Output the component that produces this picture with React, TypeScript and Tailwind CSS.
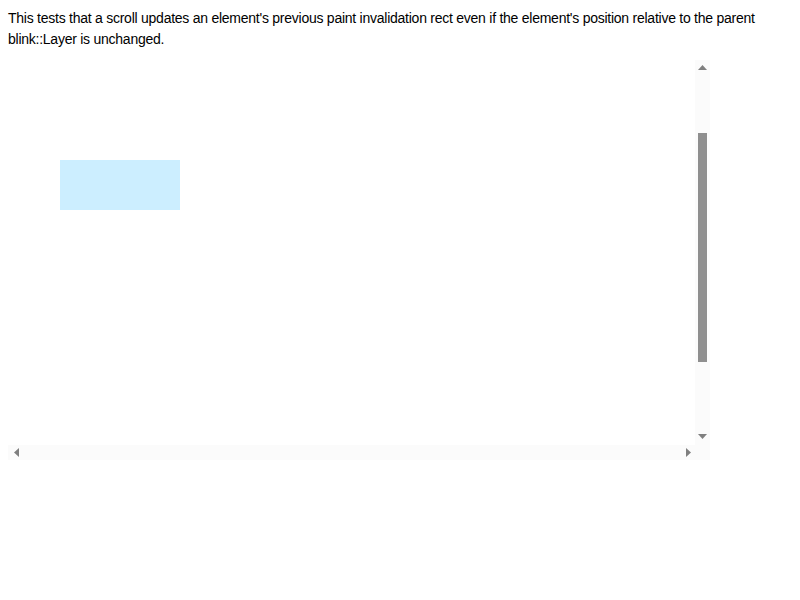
import React from "react";

function Arrow({ dir }: { dir: "up" | "down" | "left" | "right" }) {
  // small filled triangles like the classic scrollbar buttons
  const vertical = dir === "up" || dir === "down";
  const w = vertical ? 9 : 5;
  const h = vertical ? 5 : 9;
  const pts = {
    up: "4.5,0 9,5 0,5",
    down: "0,0 9,0 4.5,5",
    left: "5,0 5,9 0,4.5",
    right: "0,0 5,4.5 0,9",
  }[dir];
  return (
    <svg width={w} height={h} viewBox={`0 0 ${w} ${h}`} className="block shrink-0">
      <polygon points={pts} fill="#7f7f7f" />
    </svg>
  );
}

export default function App() {
  return (
    <div className="min-h-[600px] bg-white px-2 pt-2 text-black">
      <p
        className="text-[14px] leading-[21px] tracking-[-0.25px]"
        style={{ fontFamily: '"Liberation Sans", sans-serif' }}
      >
        This tests that a scroll updates an element's previous paint invalidation rect even if the
        element's position relative to the parent blink::Layer is unchanged.
      </p>

      <div className="mt-[10px] flex w-[702px] flex-col">
        <div className="flex h-[385px]">
          {/* scrolled content */}
          <div className="flex-1 overflow-hidden pl-[52px] pt-[100px]">
            <div className="h-[50px] w-[120px] bg-[#cceeff]" />
          </div>
          {/* vertical scrollbar */}
          <div className="flex w-[15px] flex-col items-center bg-[#fbfbfb]">
            <div className="mt-[5px]">
              <Arrow dir="up" />
            </div>
            <div className="mt-[63px] h-[229px] w-[9px] bg-[#8f8f8f]" />
            <div className="mb-[6px] mt-auto">
              <Arrow dir="down" />
            </div>
          </div>
        </div>
        <div className="flex h-[15px]">
          {/* horizontal scrollbar */}
          <div className="flex flex-1 items-center bg-[#fbfbfb] pl-[6px] pr-[4px]">
            <Arrow dir="left" />
            <div className="flex-1" />
            <Arrow dir="right" />
          </div>
          <div className="w-[15px] bg-[#fbfbfb]" />
        </div>
      </div>
    </div>
  );
}
